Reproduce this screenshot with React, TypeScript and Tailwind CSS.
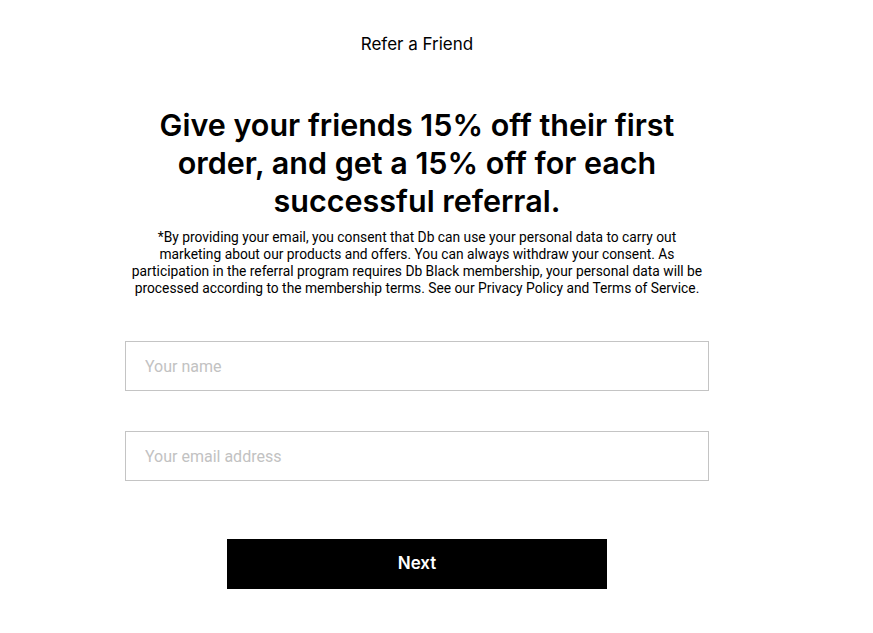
export default function App() {
  return (
    <div className="min-h-screen bg-white" style={{ fontFamily: "Inter, 'Liberation Sans', sans-serif" }}>
      <div className="ml-[125px] w-[584px] flex flex-col items-center pt-[33px]">
        <div className="text-[17px] leading-[22px] text-black">Refer a Friend</div>
        <h1 className="mt-[51px] w-[560px] text-center text-[30.5px] leading-[38px] font-semibold text-black">
          Give your friends 15% off their first order, and get a 15% off for each successful referral.
        </h1>
        <p className="mt-[9px] w-[574px] text-center text-[13.8px] leading-[17px] text-black" style={{ fontFamily: "Roboto, 'Liberation Sans', sans-serif" }}>
          *By providing your email, you consent that Db can use your personal data to carry out marketing about our products and offers. You can always withdraw your consent. As participation in the referral program requires Db Black membership, your personal data will be processed according to the membership terms. See our Privacy Policy and Terms of Service.
        </p>
        <input
          placeholder="Your name"
          className="mt-[44px] w-full h-[50px] border border-[#c4c4c4] px-[19px] text-[16px] outline-none placeholder:text-[#c2c2c2]"
          style={{ fontFamily: "Roboto, 'Liberation Sans', sans-serif" }}
        />
        <input
          placeholder="Your email address"
          className="mt-[40px] w-full h-[50px] border border-[#c4c4c4] px-[19px] text-[16px] outline-none placeholder:text-[#c2c2c2]"
          style={{ fontFamily: "Roboto, 'Liberation Sans', sans-serif" }}
        />
        <button className="mt-[58px] w-[380px] h-[50px] bg-black text-white text-[17px] font-semibold">
          Next
        </button>
      </div>
    </div>
  );
}
